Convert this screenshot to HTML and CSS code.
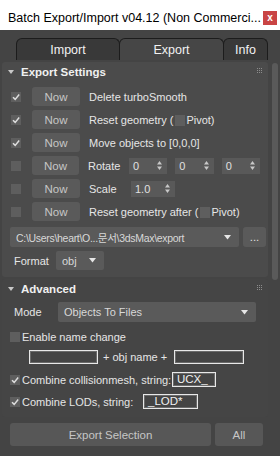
FILE: index.html
```html
<!DOCTYPE html>
<html lang="ko">
<head>
    <meta charset="UTF-8">
    <meta name="viewport" content="width=device-width, initial-scale=1.0">
    <title>Batch Export/Import</title>
    <link rel="stylesheet" href="styles.css">
</head>
<body>
    <div class="window">
        <div class="titlebar">
            <span class="title">Batch Export/Import v04.12 (Non Commerci...</span>
            <span class="close">x</span>
        </div>

        <div class="tabs">
            <div class="tab">Import</div>
            <div class="tab active">Export</div>
            <div class="tab small">Info</div>
        </div>

        <div class="scroll">
            <div class="rollouts">
                <div class="rollout">
                    <div class="rollout-head">
                        <span class="caret"></span>
                        <span class="rollout-title">Export Settings</span>
                        <svg class="grip" width="5" height="5" viewBox="0 0 5 5"><rect x="0" y="0" width="1" height="1"/><rect x="2" y="0" width="1" height="1"/><rect x="4" y="0" width="1" height="1"/><rect x="0" y="2" width="1" height="1"/><rect x="2" y="2" width="1" height="1"/><rect x="4" y="2" width="1" height="1"/><rect x="0" y="4" width="1" height="1"/><rect x="2" y="4" width="1" height="1"/><rect x="4" y="4" width="1" height="1"/></svg>
                    </div>
                    <div class="rows">
                        <div class="row">
                            <span class="check"><svg viewBox="0 0 10 10"><path d="M2 5.2 L4.2 7.4 L8.2 2.6"/></svg></span>
                            <button class="btn now">Now</button>
                            <span class="label">Delete turboSmooth</span>
                        </div>
                        <div class="row">
                            <span class="check"><svg viewBox="0 0 10 10"><path d="M2 5.2 L4.2 7.4 L8.2 2.6"/></svg></span>
                            <button class="btn now">Now</button>
                            <span class="label">Reset geometry (<span class="mini-check"></span>Pivot)</span>
                        </div>
                        <div class="row">
                            <span class="check"><svg viewBox="0 0 10 10"><path d="M2 5.2 L4.2 7.4 L8.2 2.6"/></svg></span>
                            <button class="btn now">Now</button>
                            <span class="label">Move objects to [0,0,0]</span>
                        </div>
                        <div class="row">
                            <span class="check"></span>
                            <button class="btn now">Now</button>
                            <span class="label short">Rotate</span>
                            <span class="spinner"><span>0</span><svg width="5" height="9" viewBox="0 0 5 9"><polygon points="0,3.5 5,3.5 2.5,0"/><polygon points="0,5.5 5,5.5 2.5,9"/></svg></span>
                            <span class="spinner"><span>0</span><svg width="5" height="9" viewBox="0 0 5 9"><polygon points="0,3.5 5,3.5 2.5,0"/><polygon points="0,5.5 5,5.5 2.5,9"/></svg></span>
                            <span class="spinner"><span>0</span><svg width="5" height="9" viewBox="0 0 5 9"><polygon points="0,3.5 5,3.5 2.5,0"/><polygon points="0,5.5 5,5.5 2.5,9"/></svg></span>
                        </div>
                        <div class="row">
                            <span class="check"></span>
                            <button class="btn now">Now</button>
                            <span class="label short">Scale</span>
                            <span class="spinner wide"><span>1.0</span><svg width="5" height="9" viewBox="0 0 5 9"><polygon points="0,3.5 5,3.5 2.5,0"/><polygon points="0,5.5 5,5.5 2.5,9"/></svg></span>
                        </div>
                        <div class="row">
                            <span class="check"></span>
                            <button class="btn now">Now</button>
                            <span class="label">Reset geometry after (<span class="mini-check"></span>Pivot)</span>
                        </div>
                    </div>

                    <div class="path-row">
                        <div class="dropdown path">
                            <span>C:\Users\heart\O...문서\3dsMax\export</span>
                            <svg width="7" height="5" viewBox="0 0 7 5"><polygon points="0,0 7,0 3.5,4.5"/></svg>
                        </div>
                        <button class="btn dots">...</button>
                    </div>

                    <div class="format-row">
                        <span class="field-label">Format</span>
                        <div class="dropdown format">
                            <span>obj</span>
                            <svg width="7" height="5" viewBox="0 0 7 5"><polygon points="0,0 7,0 3.5,4.5"/></svg>
                        </div>
                    </div>
                </div>

                <div class="rollout advanced">
                    <div class="rollout-head">
                        <span class="caret"></span>
                        <span class="rollout-title">Advanced</span>
                        <svg class="grip" width="5" height="5" viewBox="0 0 5 5"><rect x="0" y="0" width="1" height="1"/><rect x="2" y="0" width="1" height="1"/><rect x="4" y="0" width="1" height="1"/><rect x="0" y="2" width="1" height="1"/><rect x="2" y="2" width="1" height="1"/><rect x="4" y="2" width="1" height="1"/><rect x="0" y="4" width="1" height="1"/><rect x="2" y="4" width="1" height="1"/><rect x="4" y="4" width="1" height="1"/></svg>
                    </div>

                    <div class="mode-row">
                        <span class="field-label">Mode</span>
                        <div class="dropdown mode">
                            <span>Objects To Files</span>
                            <svg width="7" height="5" viewBox="0 0 7 5"><polygon points="0,0 7,0 3.5,4.5"/></svg>
                        </div>
                    </div>

                    <div class="opt-row enable">
                        <span class="check"></span>
                        <span class="label">Enable name change</span>
                    </div>

                    <div class="name-row">
                        <span class="text-box prefix"></span>
                        <span class="label plus">+ obj name +</span>
                        <span class="text-box suffix"></span>
                    </div>

                    <div class="opt-row collision">
                        <span class="check"><svg viewBox="0 0 10 10"><path d="M2 5.2 L4.2 7.4 L8.2 2.6"/></svg></span>
                        <span class="label collision-label">Combine collisionmesh, string:</span>
                        <span class="text-box ucx">UCX_</span>
                    </div>

                    <div class="opt-row lods">
                        <span class="check"><svg viewBox="0 0 10 10"><path d="M2 5.2 L4.2 7.4 L8.2 2.6"/></svg></span>
                        <span class="label lod-label">Combine LODs, string:</span>
                        <span class="text-box lod">_LOD*</span>
                    </div>
                </div>
            </div>

            <div class="scrollbar">
                <div class="thumb"></div>
            </div>
        </div>

        <div class="bottom">
            <button class="btn export">Export Selection</button>
            <button class="btn all">All</button>
        </div>
    </div>
</body>
</html>
```

FILE: styles.css
```css
* {
    box-sizing: border-box;
}
body {
    margin: 0;
    background-color: #444444;
    font-family: "Liberation Sans", Arial, "Noto Sans CJK KR", sans-serif;
    font-size: 11px;
    color: #e6e6e6;
}
.window {
    width: 280px;
    height: 456px;
    overflow: hidden;
    display: flex;
    flex-direction: column;
}

/* title bar */
.titlebar {
    height: 30px;
    flex: none;
    background-color: #ffffff;
    color: #000;
    display: flex;
    align-items: center;
    padding: 5px 3px 0 8px;
}
.title {
    flex: 1;
    font-size: 12.5px;
    white-space: nowrap;
    overflow: hidden;
}
.close {
    width: 14px;
    height: 14px;
    flex: none;
    background-color: #c94444;
    color: #fff;
    font-weight: bold;
    font-size: 10px;
    display: flex;
    align-items: center;
    justify-content: center;
}

/* tabs */
.tabs {
    height: 32px;
    flex: none;
    display: flex;
    align-items: flex-end;
    padding: 0 0 2px 16px;
}
.tab {
    width: 104px;
    height: 22px;
    border: 1px solid #1c1c1c;
    border-bottom: none;
    border-radius: 6px 6px 0 0;
    background-color: #393939;
    color: #f2f2f2;
    font-size: 12.5px;
    display: flex;
    align-items: center;
    justify-content: center;
}
.tab + .tab {
    margin-left: -1px;
}
.tab.active {
    width: 105px;
    background-color: #464646;
}
.tab.small {
    width: 45px;
}

/* rollouts */
.scroll {
    display: flex;
    padding-left: 2px;
    flex: none;
}
.rollouts {
    width: 266px;
    display: flex;
    flex-direction: column;
    gap: 2px;
}
.rollout {
    background-color: #4b4b4b;
    border-radius: 3px;
    padding-bottom: 7px;
}
.rollout.advanced {
    background-color: #454545;
    padding-bottom: 8px;
}
.rollout-head {
    height: 20px;
    display: flex;
    align-items: center;
    padding: 0 6px 0 6px;
}
.caret {
    width: 0;
    height: 0;
    border-left: 3px solid transparent;
    border-right: 3px solid transparent;
    border-top: 4px solid #c8c8c8;
    margin-right: 7px;
}
.rollout-title {
    flex: 1;
    font-weight: bold;
    font-size: 11.5px;
    color: #f0f0f0;
}
.grip {
    fill: #8c8c8c;
    margin-top: -3px;
}
.scrollbar {
    width: 6px;
    margin-left: 4px;
}
.thumb {
    height: 217px;
    margin-top: 1px;
    background-color: #5a5a5a;
    border-radius: 3px;
}

/* checkbox rows */
.rows {
    padding-top: 3px;
}
.row {
    height: 23px;
    display: flex;
    align-items: center;
    padding-left: 9px;
}
.check {
    width: 10px;
    height: 10px;
    flex: none;
    background-color: #5e5e5e;
    display: inline-flex;
}
.check svg {
    width: 10px;
    height: 10px;
    fill: none;
    stroke: #dedede;
    stroke-width: 1.5;
}
.mini-check {
    display: inline-block;
    width: 10px;
    height: 11px;
    background-color: #5e5e5e;
    vertical-align: -2px;
    margin: 0 1px 0 2px;
}
.btn {
    font-family: inherit;
    font-size: 11.5px;
    border: none;
    border-radius: 3px;
    background-color: #5a5a5a;
    color: #c6c6c6;
    padding: 0;
}
.now {
    width: 48px;
    height: 19px;
    margin: 0 9px 0 11px;
}
.label {
    white-space: nowrap;
}
.label.short {
    width: 42px;
}
.spinner {
    width: 39px;
    height: 16px;
    margin-right: 8px;
    background-color: #595959;
    display: flex;
    align-items: center;
    justify-content: space-between;
    padding: 0 5px 0 4px;
    color: #e0e0e0;
}
.spinner.wide {
    width: 44px;
}
.spinner svg {
    fill: #c8c8c8;
}

/* path + format */
.path-row {
    display: flex;
    margin-top: 4px;
    padding-left: 8px;
    gap: 4px;
}
.dropdown {
    height: 20px;
    background-color: #5a5a5a;
    border-radius: 2px;
    display: flex;
    align-items: center;
    justify-content: space-between;
    padding: 0 8px 0 6px;
    color: #d8d8d8;
}
.dropdown svg {
    fill: #e6e6e6;
}
.dropdown.path {
    width: 229px;
    padding-left: 6px;
    font-size: 10.5px;
    letter-spacing: -0.3px;
}
.dots {
    width: 23px;
    height: 20px;
    color: #e0e0e0;
}
.format-row,
.mode-row {
    display: flex;
    align-items: center;
    padding-left: 12px;
    margin-top: 4px;
}
.field-label {
    width: 42px;
}
.dropdown.format {
    width: 48px;
    height: 19px;
}
.mode-row {
    margin-top: 3px;
}
.mode-row .field-label {
    width: 44px;
}
.dropdown.mode {
    width: 198px;
}

/* advanced options */
.opt-row {
    display: flex;
    align-items: center;
    padding-left: 8px;
}
.opt-row .check {
    margin-right: 2px;
}
.enable {
    height: 14px;
    margin-top: 8px;
}
.name-row {
    display: flex;
    align-items: center;
    height: 14px;
    margin-top: 6px;
    padding-left: 27px;
}
.text-box {
    height: 15px;
    flex: none;
    border: 1px solid #e8e8e8;
    box-shadow: inset 0 0 0 1px #6a6a6a;
    background-color: #444444;
    color: #f0f0f0;
    padding: 0 0 0 4px;
    line-height: 13px;
    font-size: 11.5px;
}
.prefix {
    width: 69px;
    height: 14px;
}
.suffix {
    width: 70px;
    height: 14px;
}
.plus {
    width: 76px;
    padding-left: 5px;
}
.collision {
    height: 15px;
    margin-top: 8px;
}
.collision-label {
    width: 150px;
}
.ucx {
    width: 44px;
}
.lods {
    height: 15px;
    margin-top: 7px;
}
.lod-label {
    width: 121px;
}
.lod {
    width: 55px;
}

/* bottom buttons */
.bottom {
    display: flex;
    gap: 4px;
    padding-left: 10px;
    margin-top: 6px;
}
.export {
    width: 201px;
    height: 23px;
    background-color: #575757;
}
.all {
    width: 48px;
    height: 23px;
    background-color: #575757;
}
```
